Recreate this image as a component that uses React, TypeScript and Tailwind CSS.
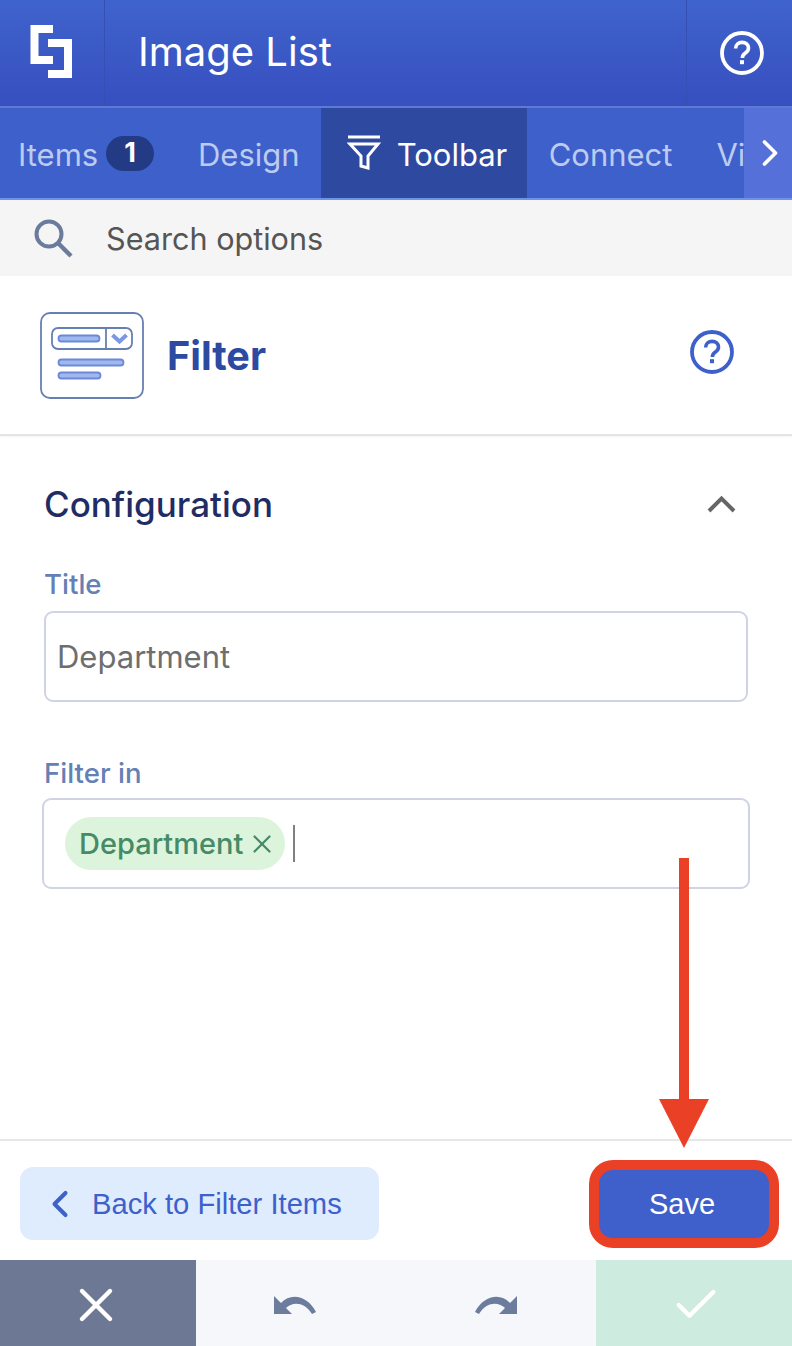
import { ChevronLeft, ChevronRight, Check, X } from "lucide-react"

const Help = ({ className }: { className: string }) => (
    <svg viewBox="0 0 44 44" width="44" height="44" fill="none" className={className}>
        <circle cx="22" cy="22" r="20" stroke="currentColor" strokeWidth="3.8" />
        <path d="M15.6 17.6c0-3.8 2.9-6.2 6.5-6.2s6.4 2.3 6.4 5.6c0 2.7-1.5 4-3.4 5.3-1.9 1.3-2.7 2.3-2.7 4.6" stroke="currentColor" strokeWidth="3.6" />
        <rect x="20" y="29.2" width="4" height="4" fill="currentColor" />
    </svg>
)

const Logo = () => (
    <svg viewBox="0 0 42 53" width="42" height="53" fill="none" stroke="#fff" strokeWidth="8" className="-mt-[3px]">
        <path d="M23 4H4.5V35H23" />
        <path d="M18 18H38V49H18" />
    </svg>
)

const tabText = "text-[#bccbef]"

export default function App() {
    return (
        <div className="relative flex h-[1346px] w-[792px] flex-col overflow-hidden bg-white font-['Inter',sans-serif]">
            <header className="flex h-[108px] border-b-2 border-[#5f79d4] bg-gradient-to-b from-[#3f63cc] to-[#374fbf] text-white">
                <div className="flex w-[105px] items-center justify-center border-r border-[#3450b4] pr-[2px]">
                    <Logo />
                </div>
                <div className="flex flex-1 items-center pl-[33px] text-[40px] -mt-[2px]">Image List</div>
                <div className="flex w-[106px] items-center justify-center border-l border-[#3450b4] pl-[4px]">
                    <Help className="text-white" />
                </div>
            </header>

            <nav className="relative flex h-[92px] overflow-hidden border-b-2 border-[#6f92ea] bg-[#3e60cb] text-[31px]">
                <div className={`flex items-center pl-[18px] ${tabText}`}>
                    <span className="mt-[4px] w-[79px]">Items</span>
                    <span className="ml-[9px] flex h-[35px] w-[48px] items-center justify-center rounded-full bg-[#233a85] text-[27px] font-bold text-white">1</span>
                </div>
                <div className={`ml-[44px] flex items-center ${tabText}`}><span className="mt-[4px]">Design</span></div>
                <div className="ml-[21px] flex w-[206px] items-center gap-[16px] bg-[#2e4aa0] pl-[26px] text-white">
                    <svg viewBox="0 0 34 36" width="34" height="36" fill="none" stroke="#fff" strokeWidth="3">
                        <path d="M1 2H33" />
                        <path d="M3 9H31L21 21V33L14 31V21Z" />
                    </svg>
                    <span className="mt-[4px]">Toolbar</span>
                </div>
                <div className={`ml-[22px] flex items-center ${tabText}`}><span className="mt-[4px]">Connect</span></div>
                <div className={`ml-[44px] flex items-center ${tabText}`}><span className="mt-[4px]">View</span></div>
                <div className="absolute inset-y-0 right-0 flex w-[48px] items-center justify-center bg-[#5570d8] pl-[4px] text-white">
                    <ChevronRight size={44} strokeWidth={2} />
                </div>
            </nav>

            <div className="flex h-[76px] items-center bg-[#f5f5f5] pl-[33px] text-[30.6px] text-[#555555]">
                <svg viewBox="0 0 40 40" width="40" height="40" fill="none" stroke="#6b7b9c" strokeWidth="4">
                    <circle cx="16" cy="16" r="12.5" />
                    <path d="M25 25L38 38" strokeWidth="4.4" />
                </svg>
                <span className="ml-[33px] mt-[2px]">Search options</span>
            </div>

            <div className="flex h-[160px] items-center border-b-2 border-[#e4e4e6] pl-[40px] pr-[58px] shadow-[0_1px_2px_rgba(0,0,0,0.05)]">
                <svg viewBox="0 0 104 88" width="104" height="88" fill="none" className="mt-[1px]">
                    <rect x="1" y="1" width="102" height="85" rx="9" stroke="#6780b4" strokeWidth="1.8" />
                    <rect x="12" y="16" width="80" height="21" rx="6" stroke="#6780b4" strokeWidth="1.8" />
                    <path d="M66 16V37" stroke="#6780b4" strokeWidth="1.8" />
                    <rect x="18.5" y="23.5" width="41" height="6" rx="3" fill="#a2b8ec" stroke="#6a89d8" strokeWidth="1.8" />
                    <path d="M72.5 23L79.5 29.5L86.5 23" stroke="#7c98e0" strokeWidth="4" />
                    <rect x="18.5" y="47.5" width="65" height="6" rx="3" fill="#a2b8ec" stroke="#6a89d8" strokeWidth="1.8" />
                    <rect x="18.5" y="60.5" width="42" height="6" rx="3" fill="#a2b8ec" stroke="#6a89d8" strokeWidth="1.8" />
                </svg>
                <h1 className="ml-[23px] mt-[3px] text-[39.6px] font-bold text-[#2c4aa2]">Filter</h1>
                <Help className="ml-auto -mt-[6px] text-[#3e60cb]" />
            </div>

            <main className="flex-1 px-[44px] pt-[45px]">
                <div className="flex items-center justify-between pr-[12px]">
                    <h2 className="text-[35px] leading-[46px] font-medium text-[#1f2d64]">Configuration</h2>
                    <svg viewBox="0 0 29 18" width="29" height="18" fill="none" stroke="#666666" strokeWidth="4"><path d="M2 16L14.5 3.5L27 16" /></svg>
                </div>
                <label className="mt-[39px] block text-[27.6px] leading-[36px] font-medium text-[#6480b4]">Title</label>
                <div className="mt-[9px] flex h-[91px] items-center rounded-[9px] border-2 border-[#d0d3e4] pl-[11px] pt-[2px] text-[31px] text-[#6e6e6e]">Department</div>
                <label className="mt-[53px] block text-[27.6px] leading-[36px] font-medium text-[#6480b4]">Filter in</label>
                <div className="-mx-[2px] mt-[7px] flex h-[91px] items-center rounded-[9px] border-2 border-[#d0d3e4] pl-[21px]">
                    <span className="flex h-[53px] items-center rounded-full bg-[#dcf4db] pl-[14px] pr-[8px] text-[29px] font-medium text-[#478a66]">
                        Department
                        <X size={30} strokeWidth={1.8} className="ml-[4px]" />
                    </span>
                    <span className="ml-[8px] h-[37px] w-[2px] bg-[#808080]" />
                </div>
            </main>

            <div className="flex h-[121px] items-start justify-between border-t-2 border-[#e6e6e8] pl-[20px] pr-[23px] pt-[26px] font-['Liberation_Sans',sans-serif]">
                <button className="flex h-[73px] w-[359px] items-center rounded-[13px] bg-[#dfecfd] pl-[18px] text-[29.2px] text-[#3e60cb]">
                    <ChevronLeft size={44} strokeWidth={2.2} />
                    <span className="ml-[10px] pt-[2px]">Back to Filter Items</span>
                </button>
                <button className="mt-[3px] h-[68px] w-[170px] rounded-[14px] bg-[#3f60cb] pr-[4px] pt-[1px] text-[29px] text-white ring-[10px] ring-[#ea4025]">Save</button>
            </div>

            <footer className="flex h-[86px]">
                <div className="flex w-[196px] items-center justify-center bg-[#6c7894] pr-[5px] pt-[4px] text-white">
                    <X size={56} strokeWidth={1.9} />
                </div>
                <div className="flex w-[200px] items-center justify-center bg-[#f5f7fb] pr-[3px] pt-[10px]">
                    <svg viewBox="0 0 44 26" width="44" height="26" fill="#6c7c9c"><path d="M1 1V19H19L13 13C19 7 31 6 39 19L43 17C35 1 18-3 8 8Z" /></svg>
                </div>
                <div className="flex w-[200px] items-center justify-center bg-[#f5f7fb] pt-[10px]">
                    <svg viewBox="0 0 44 26" width="44" height="26" fill="#6c7c9c"><path d="M43 1V19H25L31 13C25 7 13 6 5 19L1 17C9 1 26-3 36 8Z" /></svg>
                </div>
                <div className="flex w-[196px] items-center justify-center bg-[#cdecdf] pl-[4px] pt-[4px] text-white">
                    <Check size={52} strokeWidth={2} />
                </div>
            </footer>

            {/* annotation arrow over the footer */}
            <div className="absolute left-[659px] top-[858px] flex w-[50px] flex-col items-center">
                <div className="h-[241px] w-[10px] bg-[#ea4025]" />
                <div className="h-0 w-0 border-x-[25px] border-t-[49px] border-x-transparent border-t-[#ea4025]" />
            </div>
        </div>
    )
}
